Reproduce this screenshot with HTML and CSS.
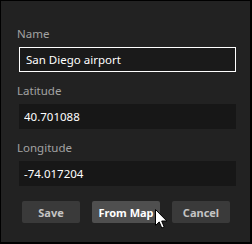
FILE: index.html
```html
<!DOCTYPE html>
<html>
    <head>
        <meta charset="utf-8" />
        <title>Edit Location</title>
        <link rel="stylesheet" href="styles.css">
    </head>
    <body>
        <div class="pane">
            <form class="locform">
                <label for="name">Name</label>
                <input type="text" id="name" class="field focused" value="San Diego airport" />
                <label for="lat">Latitude</label>
                <input type="text" id="lat" class="field" value="40.701088" />
                <label for="lng">Longitude</label>
                <input type="text" id="lng" class="field" value="-74.017204" />

                <div class="actions">
                    <button type="button" class="btn save">Save</button>
                    <button type="button" class="btn map hover">From Map</button>
                    <button type="button" class="btn cancel">Cancel</button>
                </div>
            </form>

            <!-- mouse pointer over the From Map button -->
            <svg class="pointer" width="13" height="20" viewBox="0 0 13 20">
                <path d="M0.5 0.5 L0.5 16.5 L4.2 12.9 L6.8 19 L9.2 18 L6.7 12 L11.8 12 Z" fill="#fff" stroke="#000" stroke-width="1" stroke-linejoin="round" />
            </svg>
        </div>
    </body>
</html>
```

FILE: styles.css
```css
html, body {
    margin: 0;
    padding: 0;
    background: #000;
}

body {
    font-family: "Noto Sans", "Open Sans", sans-serif;
}

.pane {
    position: relative;
    width: 252px;
    height: 244px;
    box-sizing: border-box;
    border: 1px solid #000;
    border-right-width: 2px;
    border-bottom-width: 2px;
    background-color: #222;
    padding: 24px 15px 0 16px;
}

.locform {
    display: flex;
    flex-direction: column;
}

.locform label {
    font-size: 11.5px;
    line-height: 18px;
    color: #a3a3a3;
    margin-bottom: 4px;
}

.field {
    margin: 0 0 10px 2px;
    width: 217px;
    height: 25px;
    box-sizing: border-box;
    border: none;
    background-color: #171717;
    color: #fff;
    font-family: inherit;
    font-size: 11.5px;
    padding: 0 5px;
    outline: none;
}

.field.focused {
    border: 1px solid #fff;
    background-color: #1a1a1a;
    padding: 0 6px;
}

.actions {
    display: flex;
    gap: 12px;
    margin: 5px 0 0 5px;
}

.btn {
    height: 22px;
    width: 58px;
    padding: 0;
    border: none;
    border-radius: 2px;
    background-color: #3a3a3a;
    color: #c4c4c4;
    font-family: inherit;
    font-size: 11px;
    font-weight: bold;
}

.btn.map {
    width: 68px;
}

.btn.hover {
    background-color: #4f4f4f;
    color: #fff;
}

.pointer {
    position: absolute;
    left: 154px;
    top: 208px;
}
```
